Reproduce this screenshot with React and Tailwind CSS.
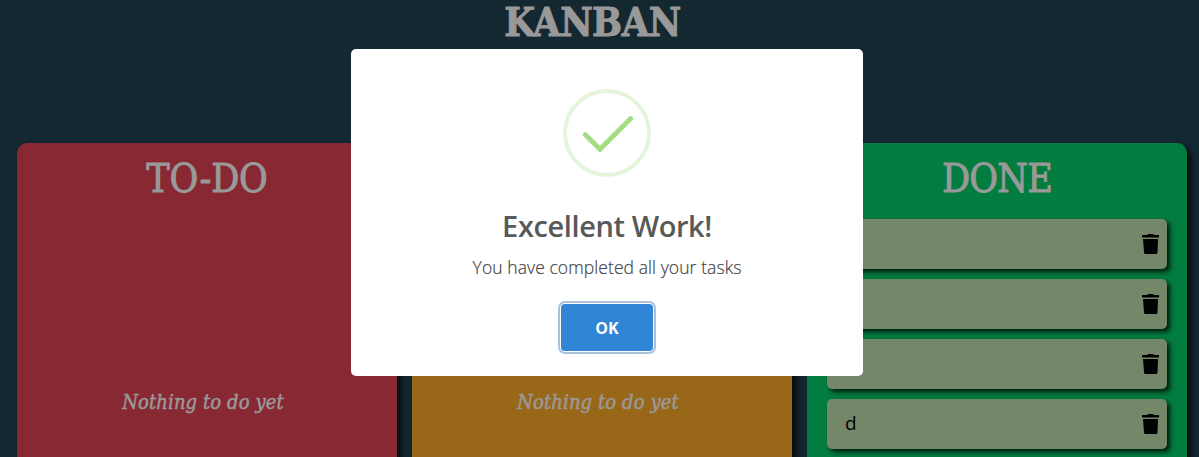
import React from "react";

function Trash() {
  return (
    <svg className="h-[20px] w-[17px]" viewBox="0 0 17 20" fill="#000">
      <path d="M0 1.6Q0 1 .6 1H5.2L6 0H11L11.8 1H16.4Q17 1 17 1.6V3.5H0Z" />
      <path d="M1 5H16L15.5 18.4Q15.4 20 13.9 20H3.6Q2.1 20 2 18.4Z" />
    </svg>
  );
}

function Task({ text }) {
  return (
    <div className="flex h-[50px] items-center justify-between rounded-[5px] bg-[#748869] pl-[18px] pr-2 shadow-[3px_3px_5px_rgba(0,0,0,0.8)]">
      <span className="pb-[2px] font-['Open_Sans',sans-serif] text-[19px] leading-none text-black">{text}</span>
      <Trash />
    </div>
  );
}

function Column({ title, titleClass, color, children }) {
  return (
    <section className={`h-[400px] w-[380px] shrink-0 rounded-t-[10px] px-5 pt-[10px] shadow-[4px_4px_6px_rgba(0,0,0,0.8)] ${color}`}>
      <h2 className="flex h-[50px] items-center justify-center whitespace-nowrap text-[39px] leading-none [-webkit-text-stroke:0.9px_#999]">
        <span className={titleClass}>{title}</span>
      </h2>
      {children}
    </section>
  );
}

function Empty() {
  return (
    <p className="mt-[187px] flex h-6 items-center justify-center whitespace-nowrap pr-2 text-[20px] italic leading-none [-webkit-text-stroke:0.5px_#999]">
      <span className="tracking-[0.1px]">Nothing to do yet</span>
    </p>
  );
}

function Modal() {
  return (
    <div className="absolute left-[351px] top-[49px] flex h-[327px] w-[512px] flex-col items-center rounded-[5px] bg-white pt-10 font-['Open_Sans',sans-serif]">
      <svg className="h-[88px] w-[88px] shrink-0" viewBox="0 0 88 88" fill="none">
        <circle cx="44" cy="44" r="42" stroke="#e4f5db" strokeWidth="4" />
        <path d="M22.3 45.7L37 60.3L67.7 29.6" stroke="#a5dc86" strokeWidth="5" strokeLinecap="round" />
      </svg>
      <h1 className="mt-[29px] flex h-[38px] items-center whitespace-nowrap text-[29px] font-semibold leading-none text-[#595959]">
        <span className="tracking-[-0.4px]">Excellent Work!</span>
      </h1>
      <p className="mt-[12px] flex h-6 items-center whitespace-nowrap text-[17.5px] font-[360] leading-none text-[#3c3c3c] [-webkit-text-stroke:0.2px_#545454]">
        <span className="tracking-[0.08px]">You have completed all your tasks</span>
      </p>
      <button className="mt-6 flex h-[47px] w-[92px] items-center justify-center rounded-[4px] bg-[#3085d6] text-[16px] font-bold leading-none text-white shadow-[0_0_0_1px_#fff,0_0_0_3px_#a9c1da]">
        OK
      </button>
    </div>
  );
}

export default function App() {
  return (
    <div className="relative h-[457px] w-[1199px] overflow-hidden bg-[#142832] font-['DejaVu_Serif_Condensed','DejaVu_Serif',serif] text-[#999]">
      <header className="flex h-[143px] w-[1185px] items-start justify-center">
        <h1 className="flex h-[46px] items-center whitespace-nowrap text-[39.5px] font-bold leading-none [-webkit-text-stroke:0.9px_#999]">
          <span className="tracking-[-0.5px]">KANBAN</span>
        </h1>
      </header>
      <main className="flex gap-[15px] pl-[17px]">
        <Column title="TO-DO" titleClass="tracking-[-0.2px]" color="bg-[#872833]">
          <Empty />
        </Column>
        <Column title="DOING" titleClass="tracking-[-0.2px]" color="bg-[#996718]">
          <Empty />
        </Column>
        <Column title="DONE" titleClass="tracking-[-0.8px]" color="bg-[#037d3f]">
          <div className="mt-4 flex flex-col gap-[10px]">
            <Task text="a" />
            <Task text="b" />
            <Task text="c" />
            <Task text="d" />
          </div>
        </Column>
      </main>
      <Modal />
    </div>
  );
}
